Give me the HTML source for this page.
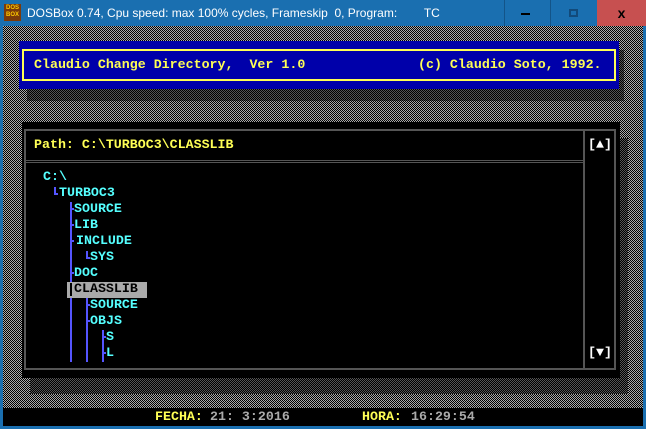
<!DOCTYPE html>
<html><head><style>
*{margin:0;padding:0;box-sizing:border-box}
body{width:646px;height:429px;background:#1a6fb0;position:relative;overflow:hidden;font-family:"Liberation Mono",monospace}
.tb{position:absolute;left:0;top:0;width:646px;height:26px;background:#1a6fb0;color:#fff;font-family:"Liberation Sans",sans-serif;font-size:12px}
.chk{background:repeating-conic-gradient(#000 0 25%,#aaa 0 50%) 0 0/2px 2px}
.shd{background:repeating-conic-gradient(#000 0 25%,#555 0 50%) 0 0/2px 2px}
.a{position:absolute}
.t{position:absolute;font-size:13.3px;font-weight:bold;white-space:pre;line-height:16px}
.c{color:#55ffff}.y{color:#ffff55}.g{color:#aaa}
.v{position:absolute;width:2px;background:#5555ff}
.h{position:absolute;width:3px;height:2px;background:#5555ff}
</style></head><body>
<div class="tb">
<div class="a" style="left:4px;top:4px;width:17px;height:17px;background:#7a3a0a;color:#fc0;font-size:6px;line-height:7px;text-align:center;padding-top:1px;font-weight:bold">DOS<br>BOX</div>
<div class="a" style="left:27px;top:6px">DOSBox 0.74, Cpu speed: max 100% cycles, Frameskip &nbsp;0, Program: &nbsp; &nbsp; &nbsp; &nbsp;TC</div>
<div class="a" style="left:504px;top:0;width:1px;height:26px;background:#135488"></div>
<div class="a" style="left:550px;top:0;width:1px;height:26px;background:#135488"></div>
<div class="a" style="left:521px;top:13px;width:9px;height:2px;background:#000"></div>
<div class="a" style="left:569px;top:9px;width:9px;height:8px;border:2px solid #124a7a"></div>
<div class="a" style="left:597px;top:0;width:49px;height:26px;background:#c75050;color:#000;font-size:14px;font-weight:bold;text-align:center;line-height:26px">x</div>
</div>
<div class="a chk" style="left:3px;top:26px;width:640px;height:382px"></div>
<div class="a" style="left:3px;top:408px;width:640px;height:18px;background:#000"></div>
<div class="a shd" style="left:27px;top:50px;width:597px;height:51px"></div>
<div class="a" style="left:19px;top:41px;width:600px;height:48px;background:#0000aa"></div>
<div class="a" style="left:22px;top:49px;width:594px;height:32px;border:2px solid #ffff55"></div>
<div class="t y" style="left:34px;top:57px">Claudio Change Directory,  Ver 1.0</div>
<div class="t y" style="left:418px;top:57px">(c) Claudio Soto, 1992.</div>
<div class="a shd" style="left:30px;top:138px;width:598px;height:256px"></div>
<div class="a" style="left:22px;top:122px;width:598px;height:256px;background:#000"></div>
<div class="a" style="left:24px;top:129px;width:592px;height:241px;border:2px solid #555"></div>
<div class="a" style="left:26px;top:160px;width:557px;height:1px;background:#555"></div>
<div class="a" style="left:26px;top:162px;width:557px;height:1px;background:#555"></div>
<div class="a" style="left:583px;top:131px;width:2px;height:237px;background:#555"></div>
<div class="t y" style="left:34px;top:137px">Path: C:\TURBOC3\CLASSLIB</div>
<div class="t" style="left:588px;top:137px;color:#fff">[▲]</div>
<div class="t" style="left:588px;top:345px;color:#fff">[▼]</div>
<div class="t c" style="left:43px;top:169px">C:\</div>
<div class="v" style="left:54px;top:187px;height:8px"></div><div class="v" style="left:54px;top:193px;width:4px;height:2px"></div>
<div class="t c" style="left:59px;top:185px">TURBOC3</div>
<div class="v" style="left:70px;top:202px;height:160px"></div>
<div class="h" style="left:71px;top:208px"></div>
<div class="h" style="left:71px;top:224px"></div>
<div class="h" style="left:71px;top:240px"></div>
<div class="h" style="left:71px;top:272px"></div>
<div class="v" style="left:86px;top:251px;height:8px"></div><div class="v" style="left:86px;top:257px;width:4px;height:2px"></div>
<div class="v" style="left:86px;top:298px;height:64px"></div>
<div class="h" style="left:87px;top:304px"></div>
<div class="h" style="left:87px;top:320px"></div>
<div class="v" style="left:102px;top:330px;height:32px"></div>
<div class="h" style="left:103px;top:336px"></div>
<div class="h" style="left:103px;top:352px"></div>
<div class="t c" style="left:74px;top:201px">SOURCE</div>
<div class="t c" style="left:74px;top:217px">LIB</div>
<div class="t c" style="left:76px;top:233px">INCLUDE</div>
<div class="t c" style="left:90px;top:249px">SYS</div>
<div class="t c" style="left:74px;top:265px">DOC</div>
<div class="a" style="left:67px;top:282px;width:80px;height:16px;background:#aaa"></div>
<div class="t" style="left:74px;top:281px;color:#000">CLASSLIB</div>
<div class="a" style="left:70px;top:283px;width:2px;height:13px;background:#000"></div>
<div class="t c" style="left:90px;top:297px">SOURCE</div>
<div class="t c" style="left:90px;top:313px">OBJS</div>
<div class="t c" style="left:106px;top:329px">S</div>
<div class="t c" style="left:106px;top:345px">L</div>
<div class="t y" style="left:155px;top:409px">FECHA:</div>
<div class="t g" style="left:210px;top:409px">21: 3:2016</div>
<div class="t y" style="left:362px;top:409px">HORA:</div>
<div class="t g" style="left:411px;top:409px">16:29:54</div>
</body></html>
